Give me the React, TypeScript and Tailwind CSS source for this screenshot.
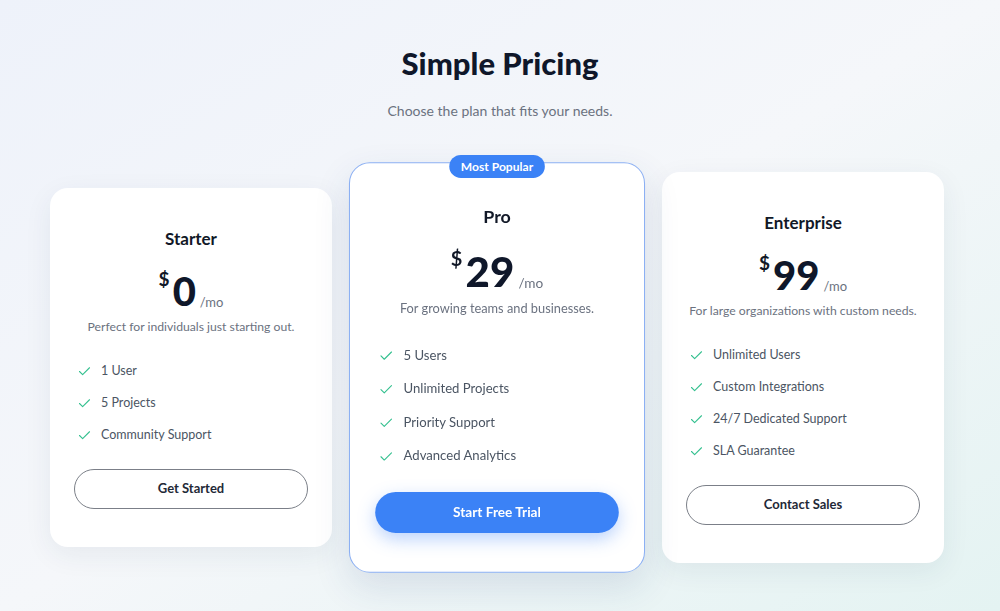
import { Check } from 'lucide-react';

type Plan = {
  name: string;
  price: string;
  blurb: string;
  features: string[];
  cta: string;
  featured?: boolean;
};

const plans: Plan[] = [
  {
    name: 'Starter',
    price: '0',
    blurb: 'Perfect for individuals just starting out.',
    features: ['1 User', '5 Projects', 'Community Support'],
    cta: 'Get Started',
  },
  {
    name: 'Pro',
    price: '29',
    blurb: 'For growing teams and businesses.',
    features: ['5 Users', 'Unlimited Projects', 'Priority Support', 'Advanced Analytics'],
    cta: 'Start Free Trial',
    featured: true,
  },
  {
    name: 'Enterprise',
    price: '99',
    blurb: 'For large organizations with custom needs.',
    features: ['Unlimited Users', 'Custom Integrations', '24/7 Dedicated Support', 'SLA Guarantee'],
    cta: 'Contact Sales',
  },
];

function PlanCard({ plan }: { plan: Plan }) {
  return (
    <div
      className={
        plan.featured
          ? 'relative flex flex-col rounded-[20px] border border-[#8cb0f3] bg-white px-6 pt-[37px] pb-[37px] shadow-[0_14px_34px_rgba(30,64,120,0.12)] scale-105 z-10'
          : 'relative flex flex-col rounded-[18px] bg-white px-6 pt-[37px] pb-[38px] shadow-[0_8px_28px_rgba(30,50,90,0.07)]'
      }
    >
      {plan.featured && (
        <span className="absolute -top-[8px] left-1/2 -translate-x-1/2 rounded-full bg-[#3b82f6] px-[11px] py-1 text-[11.5px] font-bold leading-[14px] text-white whitespace-nowrap">
          Most Popular
        </span>
      )}

      {/* Name + price */}
      <h3 className="text-center text-[17px] font-bold leading-7 text-[#111827]">{plan.name}</h3>
      <div className="mt-4 flex h-10 items-end justify-center">
        <span className="self-start text-[19px] font-bold leading-none text-[#111827]">$</span>
        <span className="ml-[3px] text-[40px] font-black leading-none text-[#0f172a] -mb-[2px]">{plan.price}</span>
        <span className="ml-1 text-[13px] leading-none text-[#6b7280]">/mo</span>
      </div>
      <p className="mt-2 whitespace-nowrap text-center text-[12.2px] leading-5 text-[#6b7280]">{plan.blurb}</p>

      {/* Feature list */}
      <ul className="mt-6 flex flex-col gap-3 pl-[3px]">
        {plan.features.map((f) => (
          <li key={f} className="flex items-center gap-[9px] text-[12.5px] leading-5 text-[#4b5563]">
            <Check size={15} strokeWidth={1.7} className="text-[#34c08f]" />
            {f}
          </li>
        ))}
      </ul>

      {plan.featured ? (
        <button className="mt-6 h-[39px] w-full rounded-full bg-[#3b82f6] text-[13px] font-bold text-white shadow-[0_6px_16px_rgba(59,130,246,0.35)]">
          {plan.cta}
        </button>
      ) : (
        <button className="mt-6 h-10 w-full rounded-full border border-[#7b7f88] bg-white text-[13px] font-bold text-[#1f2937]">
          {plan.cta}
        </button>
      )}
    </div>
  );
}

export default function App() {
  return (
    <div
      className="min-h-screen h-[611px] overflow-hidden bg-gradient-to-br from-[#eef2fa] via-[#f5f7fa] to-[#e4f3f2] pt-[45px]"
      style={{ fontFamily: 'Lato, "Noto Sans", sans-serif' }}
    >
      <h1 className="text-center text-[31px] font-black leading-9 text-[#0f172a]">Simple Pricing</h1>
      <p className="mt-5 text-center text-[14px] leading-5 text-[#6b7280]">Choose the plan that fits your needs.</p>

      <div className="ml-[50px] mt-[51px] grid w-[894px] grid-cols-3 items-center gap-6">
        {plans.map((p) => (
          <PlanCard key={p.name} plan={p} />
        ))}
      </div>
    </div>
  );
}
